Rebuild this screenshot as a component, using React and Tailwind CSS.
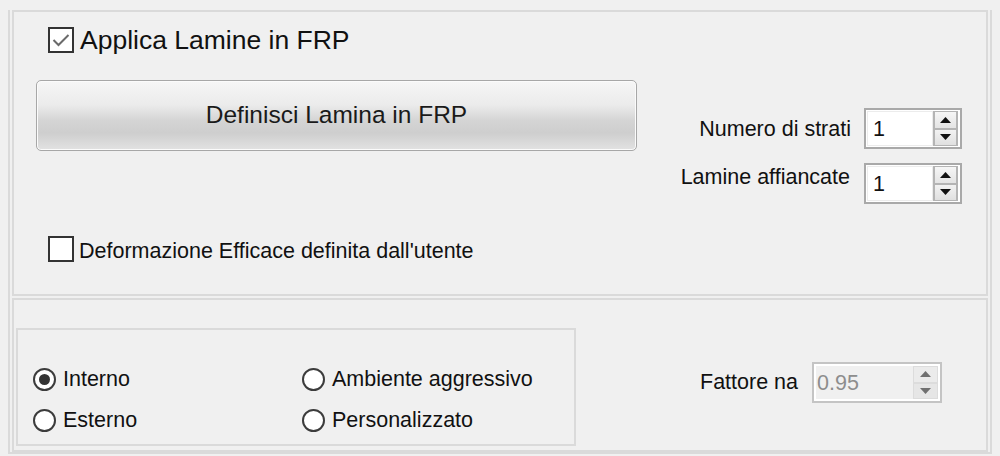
import React from 'react';

const font = "font-['Liberation_Sans',Arial,sans-serif]";

function Arrow({ up, color = '#111' }) {
  return (
    <svg width="11" height="6" viewBox="0 0 11 6">
      {up ? <polygon points="0,6 11,6 5.5,0" fill={color} /> : <polygon points="0,0 11,0 5.5,6" fill={color} />}
    </svg>
  );
}

function SpinBox({ value }) {
  return (
    <div className="w-[98px] h-[41px] border-2 border-[#a9a9a9] bg-white flex">
      <div className="flex-1 flex items-center pl-[5px] pt-[1px] border border-[#ececec] m-[1px] mr-0 text-[21.5px] leading-[24px] text-[#111]">
        {value}
      </div>
      <div className="w-[25px] my-[1px] mr-[2px] bg-[#b4b4b4] px-[2px] py-[1px] flex flex-col gap-[2px]">
        <div className="flex-1 flex items-center justify-center bg-gradient-to-b from-[#f6f6f6] to-[#e4e4e4]">
          <Arrow up />
        </div>
        <div className="flex-1 flex items-center justify-center bg-gradient-to-b from-[#f2f2f2] to-[#e0e0e0]">
          <Arrow />
        </div>
      </div>
    </div>
  );
}

function DisabledSpinBox({ value }) {
  return (
    <div className="w-[130px] h-[41px] border-2 border-[#c4c4c4] bg-white p-[2px] flex">
      <div className="flex-1 flex items-center pl-[1px] bg-[#f0f0f0] text-[21.5px] leading-[24px] text-[#8d8d8d]">
        {value}
      </div>
      <div className="w-[25px] bg-[#dcdcdc] px-[1px] py-[1px] flex flex-col gap-[2px]">
        <div className="flex-1 flex items-center justify-center bg-[#ebebeb]">
          <Arrow up color="#707070" />
        </div>
        <div className="flex-1 flex items-center justify-center bg-[#e6e6e6]">
          <Arrow color="#707070" />
        </div>
      </div>
    </div>
  );
}

function CheckBox({ checked }) {
  return (
    <div className="w-[26px] h-[26px] shrink-0 border-2 border-[#333] bg-white flex items-center justify-center">
      {checked && (
        <svg width="18" height="14" viewBox="0 0 18 14">
          <polyline points="1.5,7 6.5,12 16.5,2" fill="none" stroke="#6a6a6a" strokeWidth="2" />
        </svg>
      )}
    </div>
  );
}

function Radio({ checked, label }) {
  return (
    <div className="flex items-center h-[24px]">
      <div className="w-[23px] h-[23px] shrink-0 rounded-full border-2 border-[#3c3c3c] bg-white flex items-center justify-center">
        {checked && <div className="w-[11px] h-[11px] rounded-full bg-[#333]" />}
      </div>
      <span className="ml-[7px] text-[21.5px] leading-[24px] text-[#111] whitespace-nowrap">{label}</span>
    </div>
  );
}

export default function App() {
  return (
    <div className={`w-[1000px] h-[456px] bg-[#f0f0f0] pt-[10px] pl-[8px] overflow-hidden ${font}`}>
      <div className="w-[984px] h-[444px] border-x-2 border-b-2 border-[#dadada] px-[2px] flex flex-col gap-[2px]">
        {/* top panel */}
        <div className="h-[286px] border-2 border-[#dadada] flex">
          <div className="pl-[22px] pt-[15px] flex flex-col">
            <div className="ml-[12px] h-[25px] flex items-center">
              <CheckBox checked />
              <span className="ml-[6px] text-[26.5px] leading-[30px] text-[#111] whitespace-nowrap">Applica Lamine in FRP</span>
            </div>
            <button className="mt-[28px] w-[601px] h-[71px] rounded-[5px] border border-[#a7a7a7] bg-[linear-gradient(to_bottom,#f6f6f6_0%,#ebebeb_35%,#d4d4d4_58%,#cecece_75%,#e2e2e2_100%)] shadow-[inset_0_0_0_1px_#fbfbfb] flex items-center justify-center text-[24.5px] text-[#1a1a1a]">
              Definisci Lamina in FRP
            </button>
            <div className="mt-[85px] ml-[12px] h-[25px] flex items-center">
              <CheckBox />
              <span className="ml-[5px] mt-[4px] text-[21.5px] leading-[24px] text-[#111] whitespace-nowrap">
                Deformazione Efficace definita dall'utente
              </span>
            </div>
          </div>
          <div className="ml-auto pr-[24px] pt-[96px] flex flex-col items-end gap-[14px]">
            <div className="flex items-start gap-[13px]">
              <span className="pt-[9px] text-[21.5px] leading-[24px] text-[#111] whitespace-nowrap">Numero di strati</span>
              <SpinBox value="1" />
            </div>
            <div className="flex items-start gap-[14px]">
              <span className="pt-[2px] text-[21.5px] leading-[24px] text-[#111] whitespace-nowrap">Lamine affiancate</span>
              <SpinBox value="1" />
            </div>
          </div>
        </div>

        {/* bottom panel */}
        <div className="h-[154px] border-2 border-[#dadada] flex">
          <div className="ml-[2px] mt-[28px] w-[560px] h-[118px] border-2 border-[#dadada] pl-[15px] pt-[37px] grid grid-cols-[269px_1fr] content-start gap-y-[17px]">
            <Radio checked label="Interno" />
            <Radio label="Ambiente aggressivo" />
            <Radio label="Esterno" />
            <Radio label="Personalizzato" />
          </div>
          <div className="flex-1 flex justify-end items-start pt-[62px] pr-[44px] gap-[14px]">
            <span className="pt-[8px] text-[21.5px] leading-[24px] text-[#111] whitespace-nowrap">Fattore na</span>
            <DisabledSpinBox value="0.95" />
          </div>
        </div>
      </div>
    </div>
  );
}
